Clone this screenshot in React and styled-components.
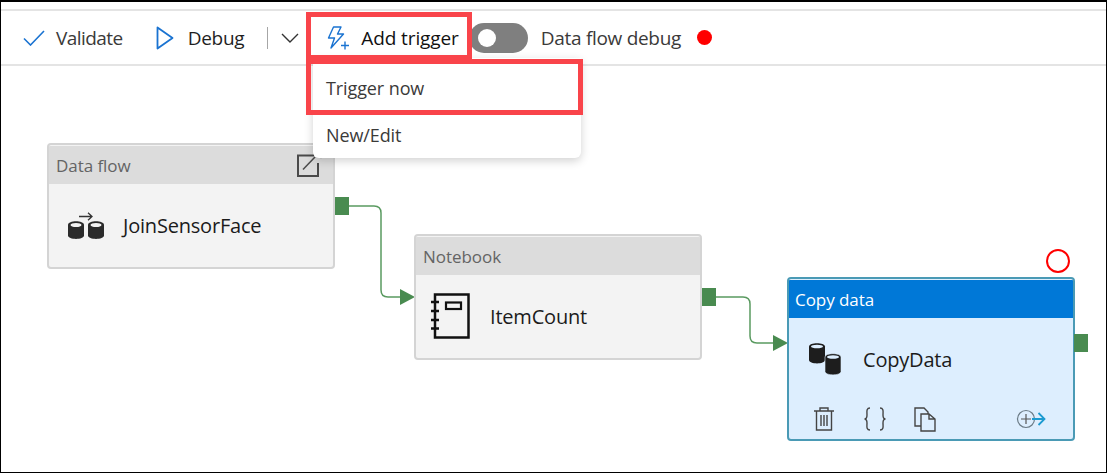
import React from "react";
import styled, { createGlobalStyle } from "styled-components";

const Global = createGlobalStyle`
  html, body { margin: 0; padding: 0; background: #fff; }
  body { font-family: "Open Sans", "Noto Sans", "Liberation Sans", sans-serif; }
`;

const Frame = styled.div`
  position: relative;
  box-sizing: border-box;
  width: 1107px;
  height: 473px;
  background: #fff;
  border: 1px solid #000;
  border-top-width: 2px;
  padding-top: 7px;
  overflow: hidden;
`;

const Toolbar = styled.div`
  box-sizing: border-box;
  height: 57px;
  border-top: 2px solid #e4e4e4;
  border-bottom: 2px solid #e4e4e4;
  display: flex;
  align-items: center;
  padding-left: 22px;
  font-size: 19px;
`;

const Action = styled.div`
  display: flex;
  align-items: center;
  gap: ${(p) => p.$gap || 13}px;
  margin-left: ${(p) => p.$ml || 0}px;
  color: ${(p) => p.$color || "#252423"};
  letter-spacing: ${(p) => p.$ls ?? -0.3}px;
  white-space: nowrap;
`;

const Divider = styled.div`
  width: 1px;
  height: 22px;
  background: #a6a6a6;
  margin-left: 23px;
`;

const Toggle = styled.div`
  box-sizing: border-box;
  width: 59px;
  height: 30px;
  border-radius: 15px;
  background: #7f7f7f;
  margin-left: 10px;
  padding: 6px 9px;
`;

const Knob = styled.div`
  width: 18px;
  height: 18px;
  border-radius: 50%;
  background: #fff;
`;

const StatusDot = styled.div`
  width: 15px;
  height: 15px;
  border-radius: 50%;
  background: #f00;
  margin-left: 16px;
`;

const Canvas = styled.div`
  position: relative;
  height: 406px;
`;

const Wires = styled.svg`
  position: absolute;
  left: 0;
  top: 0;
  width: 1105px;
  height: 406px;
`;

const Node = styled.div`
  position: absolute;
  left: ${(p) => p.$x}px;
  top: ${(p) => p.$y}px;
  box-sizing: border-box;
  width: 288px;
  height: ${(p) => p.$h}px;
  border-radius: 4px;
  border: 2px solid ${(p) => (p.$active ? "#4a9ab5" : "#d4d4d4")};
  background: ${(p) => (p.$active ? "#ddeefe" : "#f3f3f3")};
  display: flex;
  flex-direction: column;
  overflow: hidden;
`;

const NodeHeader = styled.div`
  flex: none;
  display: flex;
  align-items: center;
  justify-content: space-between;
  box-sizing: border-box;
  height: 38px;
  margin-top: 1px;
  padding: 0 11px 0 ${(p) => (p.$active ? 6 : 7)}px;
  background: ${(p) => (p.$active ? "#0078d7" : "#dcdcdc")};
  color: ${(p) => (p.$active ? "#fff" : "#646464")};
  font-size: 17px;
  letter-spacing: -0.05px;
`;

const NodeBody = styled.div`
  flex: none;
  display: flex;
  align-items: center;
  height: 82px;
  padding-left: ${(p) => p.$pl}px;
  gap: ${(p) => p.$gap}px;
  font-size: 20px;
  letter-spacing: -0.2px;
  color: #1b1b1b;
`;

const NodeActions = styled.div`
  display: flex;
  align-items: center;
  padding-left: 25px;
  height: 38px;
`;

const ActionIcon = styled.svg`
  flex: none;
  margin-right: ${(p) => p.$mr || 0}px;
  fill: none;
  stroke: #444;
`;

const Port = styled.div`
  position: absolute;
  left: ${(p) => p.$x}px;
  top: ${(p) => p.$y}px;
  width: 14px;
  height: 18px;
  background: #498b50;
`;

const Ring = styled.div`
  position: absolute;
  left: 1045px;
  top: 183px;
  box-sizing: border-box;
  width: 24px;
  height: 24px;
  border-radius: 50%;
  border: 2px solid #f00;
  background: #fff;
`;

const Menu = styled.div`
  position: absolute;
  left: 312px;
  top: -8px;
  width: 268px;
  height: 100px;
  background: #fff;
  border-radius: 0 0 6px 6px;
  box-shadow: 0 3px 10px rgba(0, 0, 0, 0.18);
  display: flex;
  flex-direction: column;
  font-size: 18px;
  letter-spacing: -0.1px;
  color: #3b3a39;
`;

const MenuItem = styled.div`
  height: 47px;
  display: flex;
  align-items: center;
  padding-left: 13px;
  &:first-child { margin-top: 6px; }
`;

const Highlight = styled.div`
  position: absolute;
  left: ${(p) => p.$x}px;
  top: ${(p) => p.$y}px;
  width: ${(p) => p.$w}px;
  height: ${(p) => p.$h}px;
  box-sizing: border-box;
  border: 5px solid #f9444a;
  pointer-events: none;
`;

const Check = () => (
  <svg width="22" height="16" viewBox="0 0 22 16" fill="none" stroke="#1a73d1" strokeWidth="1.6">
    <path d="M1 8.5 L7.5 15 L21 1" />
  </svg>
);
const Play = () => (
  <svg width="18" height="24" viewBox="0 0 18 24" fill="none" stroke="#1a73d1" strokeWidth="1.8">
    <path d="M1.5 1.5 L16.5 12 L1.5 22.5 Z" strokeLinejoin="round" />
  </svg>
);
const Chevron = () => (
  <svg width="18" height="10" viewBox="0 0 18 10" fill="none" stroke="#333" strokeWidth="1.4">
    <path d="M1 1 L9 9 L17 1" />
  </svg>
);
const Bolt = () => (
  <svg width="23" height="24" viewBox="0 0 23 24" fill="none" stroke="#1a73d1" strokeWidth="1.4">
    <path d="M6.5 1 H14 L10.5 8 H16.5 L4 22 L7.5 12 H1.5 Z" strokeLinejoin="round" />
    <path d="M14 19.5 H22 M18 15.5 V23.5" />
  </svg>
);
const EditIcon = () => (
  <svg width="25" height="23" viewBox="0 0 25 23" fill="none" stroke="#4a4a4a" strokeWidth="2">
    <path d="M21 9 V22 H1 V1.5 H17" />
    <path d="M6 15.5 L18 3" strokeWidth="1.5" />
    <path d="M21 1.5 L22 0.5 M23.5 4 L24.5 3" stroke="#777" strokeWidth="1.4" />
  </svg>
);
const DataFlowIcon = () => (
  <svg width="37" height="27" viewBox="0 0 37 27">
    <path d="M11 4.5 H24 M20 0.8 L24 4.5 L20 8.2" fill="none" stroke="#333" strokeWidth="1.3" />
    <path d="M0 13 C0 8 16 8 16 13 V23.5 C16 28 0 28 0 23.5 Z" fill="#2b2b2b" />
    <path d="M20 13 C20 8 36 8 36 13 V23.5 C36 28 20 28 20 23.5 Z" fill="#2b2b2b" />
    <ellipse cx="8" cy="13" rx="5.5" ry="2" fill="#f3f3f3" />
    <ellipse cx="28" cy="13" rx="5.5" ry="2" fill="#f3f3f3" />
  </svg>
);
const NotebookIcon = () => (
  <svg width="39" height="46" viewBox="0 0 39 46" fill="none" stroke="#111" strokeWidth="2.5">
    <path d="M4 1.5 H37.5 V44.5 H4 Z" />
    <rect x="15" y="9.5" width="15" height="6.5" strokeWidth="2.2" />
    <path d="M0 9 H8 M0 18 H8 M0 27 H8 M0 35.5 H8" strokeWidth="2.6" />
  </svg>
);
const CopyIcon = () => (
  <svg width="33" height="33" viewBox="0 0 33 33">
    <path d="M0 3.5 C0 -1 16 -1 16 3.5 V17 C16 21.5 0 21.5 0 17 Z" fill="#1d1d1d" />
    <ellipse cx="8" cy="3.5" rx="6" ry="1.8" fill="#ddeefe" />
    <path d="M16 14 C16 9.5 32 9.5 32 14 V28.5 C32 33 16 33 16 28.5 Z" fill="#1d1d1d" stroke="#ddeefe" strokeWidth="0.6" />
    <ellipse cx="24" cy="14" rx="6" ry="1.8" fill="#ddeefe" />
  </svg>
);
const Trash = () => (
  <ActionIcon width="20" height="24" viewBox="0 0 20 24" $mr={30} strokeWidth="1.4">
    <path d="M0 4 H20 M6 4 V1 H14 V4 M2.5 4 V23 H17.5 V4 M7 8 V19 M10 8 V19 M13 8 V19" />
  </ActionIcon>
);
const Braces = () => (
  <ActionIcon width="22" height="24" viewBox="0 0 22 24" $mr={28} strokeWidth="1.4">
    <path d="M6 1 C2 1 3 5 3 8 C3 10.5 2 12 0.5 12 C2 12 3 13.5 3 16 C3 19 2 23 6 23" />
    <path d="M16 1 C20 1 19 5 19 8 C19 10.5 20 12 21.5 12 C20 12 19 13.5 19 16 C19 19 20 23 16 23" />
  </ActionIcon>
);
const Pages = () => (
  <ActionIcon width="22" height="25" viewBox="0 0 22 25" $mr={80} strokeWidth="1.4">
    <path d="M7 19 H1 V1 H10 L14 5 V7" />
    <path d="M7 7 H15 L21 12 V24 H7 Z M15 7 V12 H21" />
  </ActionIcon>
);
const AddNext = () => (
  <svg width="30" height="20" viewBox="0 0 30 20" fill="none">
    <circle cx="10" cy="10" r="8.5" stroke="#6b7b86" strokeWidth="1.2" />
    <path d="M5 10 H15 M10 5 V15" stroke="#555" strokeWidth="1.2" />
    <path d="M16 10 H28 M22.5 4 L28.5 10 L22.5 16" stroke="#1d9bd1" strokeWidth="1.8" />
  </svg>
);

export default function App() {
  return (
    <>
      <Global />
      <Frame>
        <Toolbar>
          <Action $gap={11} $ls={-0.55} $color="#3b3a39"><Check />Validate</Action>
          <Action $ml={33} $gap={14} $color="#1f1f1f"><Play />Debug</Action>
          <Divider />
          <Action $ml={13}><Chevron /></Action>
          <Action $ml={28} $gap={11} $ls={-0.1} $color="#111"><Bolt />Add trigger</Action>
          <Toggle><Knob /></Toggle>
          <Action $ml={13} $ls={-0.3} $color="#3b3a39">Data flow debug</Action>
          <StatusDot />
        </Toolbar>
        <Canvas>
          <Wires viewBox="0 0 1105 406" fill="none">
            <path d="M347 140 H373 Q380 140 380 147 V224 Q380 231 387 231 H402" stroke="#5a9a60" strokeWidth="1.5" />
            <path d="M399 223 L414 231 L399 239 Z" fill="#498b50" />
            <path d="M714 231 H742 Q749 231 749 238 V270 Q749 277 756 277 H773" stroke="#5a9a60" strokeWidth="1.5" />
            <path d="M772 269 L787 277 L772 285 Z" fill="#498b50" />
          </Wires>
          <Node $x={46} $y={77} $h={126}>
            <NodeHeader>Data flow<EditIcon /></NodeHeader>
            <NodeBody $pl={19} $gap={18}><DataFlowIcon />JoinSensorFace</NodeBody>
          </Node>
          <Port $x={334} $y={131} />
          <Node $x={413} $y={168} $h={126}>
            <NodeHeader>Notebook</NodeHeader>
            <NodeBody $pl={15} $gap={20}><NotebookIcon />ItemCount</NodeBody>
          </Node>
          <Port $x={701} $y={222} />
          <Ring />
          <Node $x={786} $y={211} $h={164} $active>
            <NodeHeader $active>Copy data</NodeHeader>
            <NodeBody $pl={20} $gap={21}><CopyIcon />CopyData</NodeBody>
            <NodeActions><Trash /><Braces /><Pages /><AddNext /></NodeActions>
          </Node>
          <Port $x={1073} $y={268} />
          <Menu>
            <MenuItem>Trigger now</MenuItem>
            <MenuItem>New/Edit</MenuItem>
          </Menu>
        </Canvas>
        <Highlight $x={305} $y={10} $w={166} $h={48} />
        <Highlight $x={305} $y={57} $w={277} $h={56} />
      </Frame>
    </>
  );
}
